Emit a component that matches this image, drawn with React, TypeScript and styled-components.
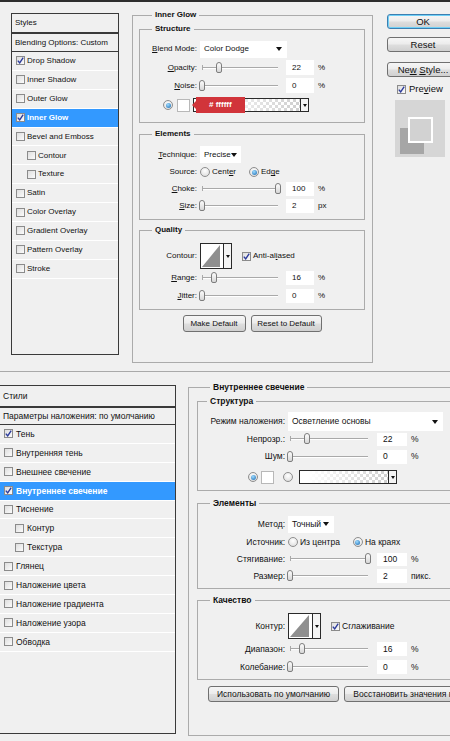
import React from "react";
import styled, { createGlobalStyle, css } from "styled-components";

const GlobalStyle = createGlobalStyle`
  html, body { margin: 0; padding: 0; background: #f0f0f0; }
  body { font-family: "Liberation Sans", Arial, sans-serif; }
  * { box-sizing: border-box; }
`;

const Page = styled.div`
  width: 450px;
  height: 741px;
  overflow: hidden;
  background: #f0f0f0;
  color: #111;
  display: flex;
  flex-direction: column;
`;

const Dialog = styled.section<{ $font: number; $top: boolean }>`
  display: flex;
  align-items: flex-start;
  font-size: ${(p) => p.$font}px;
  line-height: 1.2;
  ${(p) =>
    p.$top
      ? css`
          flex: 0 0 372px;
          border-top: 2px solid #2e2e2e;
          border-bottom: 1px solid #a9a9a9;
          padding: 11px 0 0 11px;
        `
      : css`
          flex: 1;
          padding: 13px 0 0 0;
        `}
`;

/* ---------- styles list ---------- */

const StyleList = styled.div<{ $w: number; $h: number; $ml: number }>`
  width: ${(p) => p.$w}px;
  height: ${(p) => p.$h}px;
  margin-left: ${(p) => p.$ml}px;
  flex: none;
  border: 1px solid #3a3a3a;
  display: flex;
  flex-direction: column;
  background: #f0f0f0;
`;

const ListHeader = styled.div<{ $h: number; $thick?: boolean }>`
  height: ${(p) => p.$h}px;
  flex: none;
  display: flex;
  align-items: center;
  padding-left: 3px;
  white-space: nowrap;
  border-bottom: ${(p) => (p.$thick ? 2 : 1)}px solid #3a3a3a;
`;

const ListRow = styled.div<{ $active?: boolean; $indent?: boolean; $gap: number }>`
  height: 18.9px;
  flex: none;
  display: flex;
  align-items: center;
  gap: ${(p) => p.$gap}px;
  padding-left: ${(p) => (p.$indent ? 15 : 4)}px;
  border-bottom: 1px solid #fff;
  white-space: nowrap;
  ${(p) =>
    p.$active &&
    css`
      background: #3399ff;
      color: #fff;
      font-weight: bold;
    `}
`;

/* ---------- form parts ---------- */

const Group = styled.fieldset<{ $w: number; $h?: number; $pad: string; $mt?: number }>`
  margin: ${(p) => p.$mt ?? 0}px 0 0 0;
  min-width: 0;
  width: ${(p) => p.$w}px;
  ${(p) => p.$h && `height: ${p.$h}px;`}
  flex: none;
  padding: ${(p) => p.$pad};
  border: 1px solid #ababab;
`;

const Legend = styled.legend<{ $lh: number; $ml: number }>`
  font-weight: bold;
  line-height: ${(p) => p.$lh}px;
  padding: 0 3px;
  margin-left: ${(p) => p.$ml}px;
  white-space: nowrap;
`;

const FieldRow = styled.div<{ $h: number; $indent?: number }>`
  display: flex;
  align-items: center;
  height: ${(p) => p.$h}px;
  padding-left: ${(p) => p.$indent ?? 0}px;
  white-space: nowrap;
`;

const FieldLabel = styled.span<{ $w: number }>`
  width: ${(p) => p.$w}px;
  flex: none;
  text-align: right;
  margin-right: 3px;
`;

const OptionText = styled.span<{ $ml?: number }>`
  margin-left: ${(p) => p.$ml ?? 0}px;
`;

const SelectBox = styled.div<{ $w: number; $h: number }>`
  width: ${(p) => p.$w}px;
  height: ${(p) => p.$h}px;
  flex: none;
  background: #fff;
  display: flex;
  align-items: center;
  padding: 0 5px 0 4px;
`;

const Caret = styled.span`
  margin-left: auto;
  width: 0;
  height: 0;
  border-left: 3px solid transparent;
  border-right: 3px solid transparent;
  border-top: 4px solid #111;
`;

const NumField = styled.div<{ $w: number; $h: number; $ml: number }>`
  width: ${(p) => p.$w}px;
  height: ${(p) => p.$h}px;
  margin-left: ${(p) => p.$ml}px;
  flex: none;
  background: #fff;
  display: flex;
  align-items: center;
  padding-left: 6px;
`;

const Unit = styled.span`
  margin-left: 4px;
`;

const SliderTrack = styled.div<{ $w: number }>`
  position: relative;
  width: ${(p) => p.$w}px;
  height: 12px;
  flex: none;
  &::before {
    content: "";
    position: absolute;
    left: 2px;
    right: 2px;
    top: 5px;
    height: 1px;
    background: #a9a9a9;
    box-shadow: 0 1px 0 #fff;
  }
  &::after {
    content: "";
    position: absolute;
    left: 2px;
    top: 3px;
    width: 1px;
    height: 5px;
    background: #a9a9a9;
  }
`;

const SliderThumb = styled.span`
  position: absolute;
  top: 0;
  width: 6px;
  height: 11px;
  margin-left: -3px;
  border: 1px solid #7d7d7d;
  border-radius: 3px 3px 2px 2px;
  background: linear-gradient(#fdfdfd, #d6d6d6);
  z-index: 1;
`;

const Slider = ({ w, value }: { w: number; value: number }) => (
  <SliderTrack $w={w}>
    <SliderThumb style={{ left: 2 + ((w - 4) * value) / 100 }} />
  </SliderTrack>
);

const RadioDot = styled.span<{ $on?: boolean; $ml?: number }>`
  width: 10px;
  height: 10px;
  flex: none;
  margin-left: ${(p) => p.$ml ?? 0}px;
  margin-right: 2px;
  border-radius: 50%;
  border: 1px solid #8e8e8e;
  background: radial-gradient(circle at 50% 35%, #ffffff, #d8d8d8);
  display: inline-flex;
  align-items: center;
  justify-content: center;
  ${(p) =>
    p.$on &&
    css`
      &::after {
        content: "";
        width: 5px;
        height: 5px;
        border-radius: 50%;
        background: radial-gradient(circle at 40% 35%, #9fdcff, #1466b0);
      }
    `}
`;

const CheckBox = styled.span<{ $ml?: number }>`
  width: 9px;
  height: 9px;
  flex: none;
  margin-left: ${(p) => p.$ml ?? 0}px;
  border: 1px solid #8b8b8b;
  background: linear-gradient(135deg, #dedede, #fbfbfb);
  display: inline-flex;
  align-items: center;
  justify-content: center;
`;

const Check = ({ checked, ml }: { checked?: boolean; ml?: number }) => (
  <CheckBox $ml={ml}>
    {checked && (
      <svg width="7" height="7" viewBox="0 0 7 7">
        <path d="M0.8 3.6 L2.7 5.9 L6.2 0.6" fill="none" stroke="#2d3c9c" strokeWidth="1.4" />
      </svg>
    )}
  </CheckBox>
);

const Swatch = styled.span<{ $ml: number }>`
  width: 13px;
  height: 13px;
  flex: none;
  margin-left: ${(p) => p.$ml}px;
  background: #fff;
  border: 1px solid #b8b8b8;
`;

const GradientBox = styled.div<{ $w: number; $ml: number }>`
  position: relative;
  width: ${(p) => p.$w}px;
  height: 14px;
  flex: none;
  margin-left: ${(p) => p.$ml}px;
  border: 1px solid #2a2a2a;
  display: flex;
  background: linear-gradient(to right, #fff 8%, rgba(255, 255, 255, 0) 92%),
    repeating-conic-gradient(#cfcfcf 0 25%, #fff 0 50%) 0 0 / 6px 6px;
`;

const GradientArrow = styled.span`
  margin-left: auto;
  width: 8px;
  border-left: 1px solid #2a2a2a;
  background: #f4f4f4;
  display: flex;
  align-items: center;
  justify-content: center;
  &::after {
    content: "";
    border-left: 2px solid transparent;
    border-right: 2px solid transparent;
    border-top: 3px solid #111;
  }
`;

const ColorTip = styled.span`
  position: absolute;
  left: 2px;
  top: -2px;
  width: 49px;
  height: 16px;
  background: #d1343a;
  color: #fff;
  font-weight: bold;
  display: flex;
  align-items: center;
  padding-left: 13px;
  &::before {
    content: "";
    position: absolute;
    left: -4px;
    top: 4px;
    border-top: 4px solid transparent;
    border-bottom: 4px solid transparent;
    border-right: 4px solid #d1343a;
  }
`;

const ContourBox = styled.div<{ $w: number; $h: number }>`
  width: ${(p) => p.$w}px;
  height: ${(p) => p.$h}px;
  flex: none;
  display: flex;
  border: 1px solid #2a2a2a;
  background: #fff;
`;

const ContourArrow = styled.span`
  width: 8px;
  margin-left: auto;
  border-left: 1px solid #2a2a2a;
  background: #f4f4f4;
  display: flex;
  align-items: center;
  justify-content: center;
  &::after {
    content: "";
    border-left: 2px solid transparent;
    border-right: 2px solid transparent;
    border-top: 3px solid #111;
  }
`;

const Contour = ({ w, h }: { w: number; h: number }) => (
  <ContourBox $w={w} $h={h}>
    <svg width={w - 10} height={h - 2} viewBox={`0 0 ${w - 10} ${h - 2}`}>
      <polygon points={`1,${h - 3} ${w - 13},1 ${w - 13},${h - 3}`} fill="#8f8f8f" />
    </svg>
    <ContourArrow />
  </ContourBox>
);

const ButtonRow = styled.div<{ $mt: number; $center?: boolean; $pl?: number }>`
  display: flex;
  gap: 5px;
  margin-top: ${(p) => p.$mt}px;
  justify-content: ${(p) => (p.$center ? "center" : "flex-start")};
  padding-left: ${(p) => p.$pl ?? 0}px;
`;

const Btn = styled.button<{ $w: number; $h: number; $default?: boolean }>`
  width: ${(p) => p.$w}px;
  height: ${(p) => p.$h}px;
  flex: none;
  padding: 0;
  font: inherit;
  color: #111;
  white-space: nowrap;
  overflow: hidden;
  border: 1px solid #707070;
  border-radius: 3px;
  background: linear-gradient(#f6f6f6 0%, #ececec 48%, #dedede 52%, #d0d0d0 100%);
  ${(p) =>
    p.$default &&
    css`
      border-color: #3c7fb1;
      box-shadow: inset 0 0 0 1px #6fd0f7;
    `}
`;

/* ---------- right column (top dialog) ---------- */

const SideColumn = styled.div`
  display: flex;
  flex-direction: column;
  margin: 1px 0 0 14px;
  font-size: 9.5px;
  flex: none;
`;

const SideGap = styled.div<{ $h: number }>`
  height: ${(p) => p.$h}px;
`;

const PreviewRow = styled.label`
  display: flex;
  align-items: center;
  gap: 3px;
  height: 12px;
  margin-left: 10px;
`;

const PreviewBox = styled.div`
  width: 50px;
  height: 57px;
  margin-left: 8px;
  background: #d6d6d6;
`;

/* ---------- data ---------- */

type StyleItem = { label: string; checked?: boolean; active?: boolean; indent?: boolean };

const enStyles: StyleItem[] = [
  { label: "Drop Shadow", checked: true },
  { label: "Inner Shadow" },
  { label: "Outer Glow" },
  { label: "Inner Glow", checked: true, active: true },
  { label: "Bevel and Emboss" },
  { label: "Contour", indent: true },
  { label: "Texture", indent: true },
  { label: "Satin" },
  { label: "Color Overlay" },
  { label: "Gradient Overlay" },
  { label: "Pattern Overlay" },
  { label: "Stroke" },
];

const ruStyles: StyleItem[] = [
  { label: "Тень", checked: true },
  { label: "Внутренняя тень" },
  { label: "Внешнее свечение" },
  { label: "Внутреннее свечение", checked: true, active: true },
  { label: "Тиснение" },
  { label: "Контур", indent: true },
  { label: "Текстура", indent: true },
  { label: "Глянец" },
  { label: "Наложение цвета" },
  { label: "Наложение градиента" },
  { label: "Наложение узора" },
  { label: "Обводка" },
];

const StyleRows = ({ items, gap }: { items: StyleItem[]; gap: number }) => (
  <>
    {items.map((it) => (
      <ListRow key={it.label} $active={it.active} $indent={it.indent} $gap={gap}>
        <Check checked={it.checked} />
        {it.label}
      </ListRow>
    ))}
  </>
);

/* ---------- dialogs ---------- */

const EnglishDialog = () => {
  const lw = 57;
  return (
    <Dialog $font={8} $top>
      <StyleList $w={108} $h={342} $ml={0}>
        <ListHeader $h={20} $thick>
          Styles
        </ListHeader>
        <ListHeader $h={18}>Blending Options: Custom</ListHeader>
        <StyleRows items={enStyles} gap={2} />
      </StyleList>

      <Group $w={241} $h={353} $pad="4px 7px 0 6px" style={{ marginLeft: 13, marginTop: -3 }}>
        <Legend $lh={10} $ml={13}>
          Inner Glow
        </Legend>

        <Group $w={226} $pad="6px 0 6px 0">
          <Legend $lh={10} $ml={12}>
            Structure
          </Legend>
          <FieldRow $h={18}>
            <FieldLabel $w={lw}>
              <u>B</u>lend Mode:
            </FieldLabel>
            <SelectBox $w={87} $h={17}>
              Color Dodge
              <Caret />
            </SelectBox>
          </FieldRow>
          <FieldRow $h={19}>
            <FieldLabel $w={lw}>
              <u>O</u>pacity:
            </FieldLabel>
            <Slider w={80} value={22} />
            <NumField $w={28} $h={15} $ml={6}>
              22
            </NumField>
            <Unit>%</Unit>
          </FieldRow>
          <FieldRow $h={17}>
            <FieldLabel $w={lw}>
              <u>N</u>oise:
            </FieldLabel>
            <Slider w={80} value={0} />
            <NumField $w={28} $h={15} $ml={6}>
              0
            </NumField>
            <Unit>%</Unit>
          </FieldRow>
          <FieldRow $h={22} $indent={23}>
            <RadioDot $on />
            <Swatch $ml={2} />
            <GradientBox $w={116} $ml={3}>
              <ColorTip># ffffff</ColorTip>
              <GradientArrow />
            </GradientBox>
          </FieldRow>
        </Group>

        <Group $w={226} $pad="7px 0 5px 0" $mt={6}>
          <Legend $lh={10} $ml={12}>
            Elements
          </Legend>
          <FieldRow $h={17}>
            <FieldLabel $w={lw}>
              <u>T</u>echnique:
            </FieldLabel>
            <SelectBox $w={41} $h={17}>
              Precise
              <Caret />
            </SelectBox>
          </FieldRow>
          <FieldRow $h={18}>
            <FieldLabel $w={lw}>Source:</FieldLabel>
            <RadioDot />
            <OptionText>
              Cent<u>e</u>r
            </OptionText>
            <RadioDot $on $ml={13} />
            <OptionText>
              Ed<u>g</u>e
            </OptionText>
          </FieldRow>
          <FieldRow $h={16}>
            <FieldLabel $w={lw}>
              <u>C</u>hoke:
            </FieldLabel>
            <Slider w={80} value={100} />
            <NumField $w={28} $h={14} $ml={6}>
              100
            </NumField>
            <Unit>%</Unit>
          </FieldRow>
          <FieldRow $h={17}>
            <FieldLabel $w={lw}>
              <u>S</u>ize:
            </FieldLabel>
            <Slider w={80} value={0} />
            <NumField $w={28} $h={14} $ml={6}>
              2
            </NumField>
            <Unit>px</Unit>
          </FieldRow>
        </Group>

        <Group $w={226} $pad="8px 0 5px 0" $mt={5}>
          <Legend $lh={10} $ml={12}>
            Quality
          </Legend>
          <FieldRow $h={26}>
            <FieldLabel $w={lw}>Contour:</FieldLabel>
            <Contour w={32} h={26} />
            <Check checked ml={10} />
            <OptionText $ml={2}>
              Anti-al<u>i</u>ased
            </OptionText>
          </FieldRow>
          <FieldRow $h={18}>
            <FieldLabel $w={lw}>
              <u>R</u>ange:
            </FieldLabel>
            <Slider w={80} value={16} />
            <NumField $w={28} $h={14} $ml={6}>
              16
            </NumField>
            <Unit>%</Unit>
          </FieldRow>
          <FieldRow $h={17}>
            <FieldLabel $w={lw}>
              <u>J</u>itter:
            </FieldLabel>
            <Slider w={80} value={0} />
            <NumField $w={28} $h={14} $ml={6}>
              0
            </NumField>
            <Unit>%</Unit>
          </FieldRow>
        </Group>

        <ButtonRow $mt={5} $center>
          <Btn $w={63} $h={17}>Make Default</Btn>
          <Btn $w={71} $h={17}>Reset to Default</Btn>
        </ButtonRow>
      </Group>

      <SideColumn>
        <Btn $w={72} $h={15} $default>
          OK
        </Btn>
        <SideGap $h={8} />
        <Btn $w={72} $h={15}>
          Reset
        </Btn>
        <SideGap $h={10} />
        <Btn $w={72} $h={15}>
          Ne<u>w</u> <u>S</u>tyle...
        </Btn>
        <SideGap $h={6} />
        <PreviewRow>
          <Check checked />
          <OptionText>
            Pre<u>v</u>iew
          </OptionText>
        </PreviewRow>
        <SideGap $h={5} />
        <PreviewBox>
          <svg width="50" height="57" viewBox="0 0 50 57">
            <rect x="5" y="28" width="24" height="26" fill="#a6a6a6" />
            <rect x="14" y="18" width="23" height="24" fill="#d2d2d2" stroke="#fff" strokeWidth="2" />
          </svg>
        </PreviewBox>
      </SideColumn>
    </Dialog>
  );
};

const RussianDialog = () => {
  const lw = 87;
  return (
    <Dialog $font={8.5} $top={false}>
      <StyleList $w={177} $h={349} $ml={-1}>
        <ListHeader $h={22} $thick>
          Стили
        </ListHeader>
        <ListHeader $h={17}>Параметры наложения: по умолчанию</ListHeader>
        <StyleRows items={ruStyles} gap={3} />
      </StyleList>

      <Group $w={330} $h={354} $pad="3px 0 0 8px" style={{ marginLeft: 12, marginTop: -3 }}>
        <Legend $lh={11} $ml={13}>
          Внутреннее свечение
        </Legend>

        <Group $w={310} $pad="5px 0 2px 0">
          <Legend $lh={11} $ml={9}>
            Структура
          </Legend>
          <FieldRow $h={19}>
            <FieldLabel $w={lw}>Режим наложения:</FieldLabel>
            <SelectBox $w={155} $h={19}>
              Осветление основы
              <Caret />
            </SelectBox>
          </FieldRow>
          <FieldRow $h={16}>
            <FieldLabel $w={lw}>Непрозр.:</FieldLabel>
            <Slider w={82} value={22} />
            <NumField $w={30} $h={13} $ml={7}>
              22
            </NumField>
            <Unit>%</Unit>
          </FieldRow>
          <FieldRow $h={19}>
            <FieldLabel $w={lw}>Шум:</FieldLabel>
            <Slider w={82} value={0} />
            <NumField $w={30} $h={14} $ml={7}>
              0
            </NumField>
            <Unit>%</Unit>
          </FieldRow>
          <FieldRow $h={22} $indent={50}>
            <RadioDot $on />
            <Swatch $ml={1} />
            <RadioDot $ml={9} />
            <GradientBox $w={98} $ml={4}>
              <GradientArrow />
            </GradientBox>
          </FieldRow>
        </Group>

        <Group $w={310} $pad="6px 0 3px 0" $mt={7}>
          <Legend $lh={11} $ml={12}>
            Элементы
          </Legend>
          <FieldRow $h={18}>
            <FieldLabel $w={lw}>Метод:</FieldLabel>
            <SelectBox $w={46} $h={17}>
              Точный
              <Caret />
            </SelectBox>
          </FieldRow>
          <FieldRow $h={18}>
            <FieldLabel $w={lw}>Источник:</FieldLabel>
            <RadioDot />
            <OptionText>Из центра</OptionText>
            <RadioDot $on $ml={13} />
            <OptionText>На краях</OptionText>
          </FieldRow>
          <FieldRow $h={16}>
            <FieldLabel $w={lw}>Стягивание:</FieldLabel>
            <Slider w={82} value={100} />
            <NumField $w={30} $h={13} $ml={7}>
              100
            </NumField>
            <Unit>%</Unit>
          </FieldRow>
          <FieldRow $h={18}>
            <FieldLabel $w={lw}>Размер:</FieldLabel>
            <Slider w={82} value={0} />
            <NumField $w={30} $h={14} $ml={7}>
              2
            </NumField>
            <Unit>пикс.</Unit>
          </FieldRow>
        </Group>

        <Group $w={310} $pad="7px 0 4px 0" $mt={6}>
          <Legend $lh={11} $ml={12}>
            Качество
          </Legend>
          <FieldRow $h={26}>
            <FieldLabel $w={lw}>Контур:</FieldLabel>
            <Contour w={33} h={26} />
            <Check checked ml={10} />
            <OptionText $ml={2}>Сглаживание</OptionText>
          </FieldRow>
          <FieldRow $h={20}>
            <FieldLabel $w={lw}>Диапазон:</FieldLabel>
            <Slider w={82} value={16} />
            <NumField $w={30} $h={14} $ml={7}>
              16
            </NumField>
            <Unit>%</Unit>
          </FieldRow>
          <FieldRow $h={16}>
            <FieldLabel $w={lw}>Колебание:</FieldLabel>
            <Slider w={82} value={0} />
            <NumField $w={30} $h={14} $ml={7}>
              0
            </NumField>
            <Unit>%</Unit>
          </FieldRow>
        </Group>

        <ButtonRow $mt={6} $pl={11}>
          <Btn $w={131} $h={16}>Использовать по умолчанию</Btn>
          <Btn $w={170} $h={16}>Восстановить значения по умолчанию</Btn>
        </ButtonRow>
      </Group>
    </Dialog>
  );
};

export default function App() {
  return (
    <>
      <GlobalStyle />
      <Page>
        <EnglishDialog />
        <RussianDialog />
      </Page>
    </>
  );
}
